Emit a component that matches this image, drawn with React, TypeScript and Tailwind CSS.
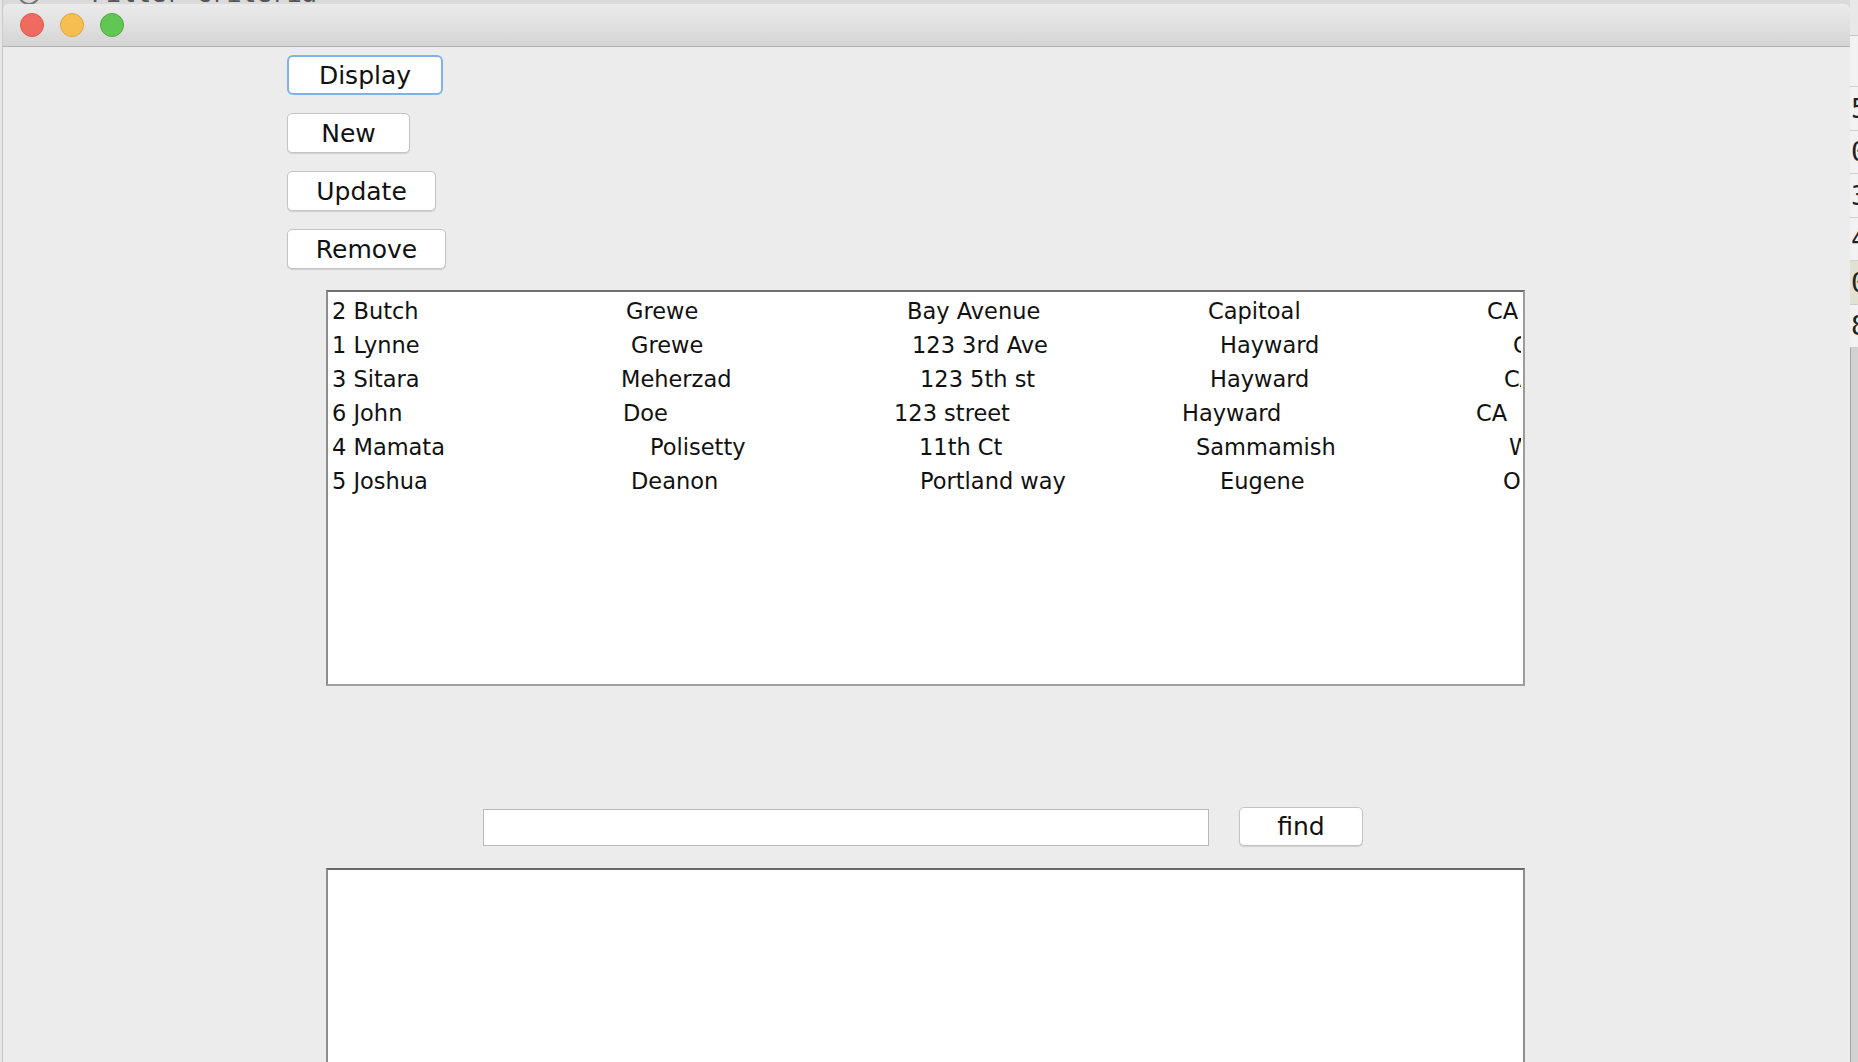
import React from "react";

type Cell = { text: string; w: string };

const rows: Cell[][] = [
  [
    { text: "2 Butch", w: "w-[294px]" },
    { text: "Grewe", w: "w-[281px]" },
    { text: "Bay Avenue", w: "w-[301px]" },
    { text: "Capitoal", w: "w-[279px]" },
    { text: "CA", w: "" },
  ],
  [
    { text: "1 Lynne", w: "w-[299px]" },
    { text: "Grewe", w: "w-[281px]" },
    { text: "123 3rd Ave", w: "w-[308px]" },
    { text: "Hayward", w: "w-[293px]" },
    { text: "CA", w: "" },
  ],
  [
    { text: "3 Sitara", w: "w-[289px]" },
    { text: "Meherzad", w: "w-[299px]" },
    { text: "123 5th st", w: "w-[290px]" },
    { text: "Hayward", w: "w-[294px]" },
    { text: "CA", w: "" },
  ],
  [
    { text: "6 John", w: "w-[291px]" },
    { text: "Doe", w: "w-[271px]" },
    { text: "123 street", w: "w-[288px]" },
    { text: "Hayward", w: "w-[294px]" },
    { text: "CA", w: "" },
  ],
  [
    { text: "4 Mamata", w: "w-[318px]" },
    { text: "Polisetty", w: "w-[269px]" },
    { text: "11th Ct", w: "w-[277px]" },
    { text: "Sammamish", w: "w-[313px]" },
    { text: "WA", w: "" },
  ],
  [
    { text: "5 Joshua", w: "w-[299px]" },
    { text: "Deanon", w: "w-[289px]" },
    { text: "Portland way", w: "w-[300px]" },
    { text: "Eugene", w: "w-[283px]" },
    { text: "OR", w: "" },
  ],
];

const sideNums = [
  { n: "5", bg: "bg-[#f2f2f2]" },
  { n: "0", bg: "bg-[#f2f2f2]" },
  { n: "3", bg: "bg-[#f2f2f2]" },
  { n: "4", bg: "bg-[#f2f2f2]" },
  { n: "0", bg: "bg-[#e2e1d2]" },
  { n: "8", bg: "bg-[#f2f2f2]" },
];

function MacButton({ label, w, focused }: { label: string; w: string; focused?: boolean }) {
  return (
    <button
      className={
        "flex h-[40px] items-center justify-center bg-white text-[25px] leading-none text-[#111] " +
        w +
        (focused
          ? " rounded-[6px] border-2 border-[#80b1ea]"
          : " rounded-[5px] border border-[#c4c4c4] shadow-[0_1px_1px_rgba(0,0,0,0.12)]")
      }
    >
      {label}
    </button>
  );
}

export default function App() {
  return (
    <div className="relative flex h-[1062px] w-[1858px] overflow-hidden bg-[#dadada] font-['DejaVu_Sans',sans-serif]">
      {/* background app text peeking above the window */}
      <div className="absolute left-[18px] top-[-19px] flex items-center gap-[36px] font-['DejaVu_Sans_Mono',monospace] text-[25px] leading-[26px] text-[#555]">
        <span className="inline-block h-[22px] w-[22px] rounded-full border-2 border-[#777]" />
        <span>&lt;Filter Criteria&gt;</span>
      </div>

      {/* left sliver */}
      <div className="w-[3px] shrink-0 border-r border-[#c9c9c9] bg-[#e6e6e6]" />

      {/* window */}
      <div className="relative z-10 mt-[4px] flex w-[1847px] shrink-0 flex-col overflow-hidden rounded-t-[6px] bg-[#ececec]">
        {/* title bar */}
        <div className="flex h-[43px] shrink-0 items-center gap-[16px] border-b border-[#b3b3b3] bg-gradient-to-b from-[#ebebeb] to-[#d5d5d5] pl-[17px]">
          <span className="h-[24px] w-[24px] rounded-full border border-[#dc5a4f] bg-[#ef6b5f]" />
          <span className="h-[24px] w-[24px] rounded-full border border-[#dba544] bg-[#f6be50]" />
          <span className="h-[24px] w-[24px] rounded-full border border-[#4ea83f] bg-[#62c655]" />
        </div>

        {/* content */}
        <div className="flex flex-1 flex-col">
          <div className="flex flex-col items-start gap-[18px] pl-[284px] pt-[8px]">
            <MacButton label="Display" w="w-[156px]" focused />
            <MacButton label="New" w="w-[123px]" />
            <MacButton label="Update" w="w-[149px]" />
            <MacButton label="Remove" w="w-[159px]" />
          </div>

          {/* list text area */}
          <div className="ml-[323px] mt-[21px] flex h-[396px] w-[1199px] border-2 border-b-[#a0a0a0] border-l-[#8e8e8e] border-r-[#9c9c9c] border-t-[#6e6e6e] bg-white">
            <div className="mr-[2px] flex flex-1 flex-col overflow-hidden pl-[4px] pt-[2px]">
              {rows.map((r, i) => (
                <div key={i} className="flex h-[34px] shrink-0 items-center whitespace-pre text-[22.5px] leading-[34px] text-[#111]">
                  {r.map((c, j) => (
                    <span key={j} className={"shrink-0 " + c.w}>
                      {c.text}
                    </span>
                  ))}
                </div>
              ))}
            </div>
          </div>

          {/* search row */}
          <div className="mt-[121px] flex items-end">
            <div className="ml-[480px] h-[37px] w-[726px] border border-[#b9b9b9] bg-white" />
            <button className="ml-[30px] flex h-[39px] w-[124px] items-center justify-center rounded-[5px] border border-[#c4c4c4] bg-white text-[25px] leading-none text-[#111] shadow-[0_1px_1px_rgba(0,0,0,0.12)]">
              find
            </button>
          </div>

          {/* result text area */}
          <div className="ml-[323px] mt-[22px] w-[1199px] flex-1 border-x-2 border-t-2 border-l-[#8e8e8e] border-r-[#8e8e8e] border-t-[#686868] bg-white" />
        </div>
      </div>

      {/* right sliver: background editor gutter */}
      <div className="flex w-[8px] shrink-0 flex-col overflow-hidden bg-[#d4d4d4]">
        <div className="h-[36px] shrink-0 border-b border-[#c6c6c6] bg-[#e8e8e8]" />
        <div className="h-[51px] shrink-0 border-b border-[#d0d0d0] bg-[#f2f2f2]" />
        {sideNums.map((s, i) => (
          <div
            key={i}
            className={"flex h-[43.5px] shrink-0 items-center border-b border-[#d0d0d0] font-['DejaVu_Sans_Mono',monospace] text-[27px] leading-none text-[#222] " + s.bg}
          >
            <span className="pl-[1px]">{s.n}</span>
          </div>
        ))}
        <div className="flex-1 border-l border-[#a3a3a3] bg-[#d3d3d3]" />
      </div>
    </div>
  );
}
